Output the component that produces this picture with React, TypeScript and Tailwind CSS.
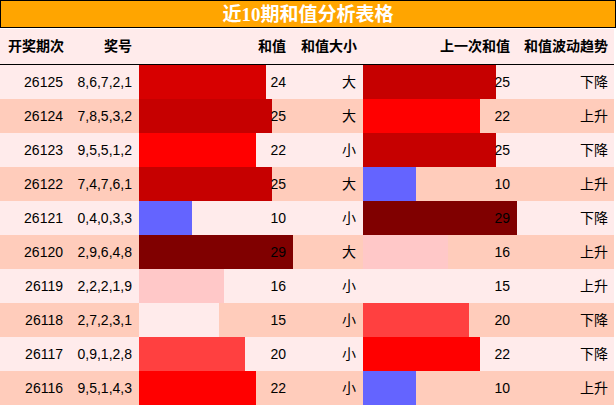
import React from 'react';

type Row = [string, string, number, string, number, string];

const rows: Row[] = [
  ['26125', '8,6,7,2,1', 24, '大', 25, '下降'],
  ['26124', '7,8,5,3,2', 25, '大', 22, '上升'],
  ['26123', '9,5,5,1,2', 22, '小', 25, '下降'],
  ['26122', '7,4,7,6,1', 25, '大', 10, '上升'],
  ['26121', '0,4,0,3,3', 10, '小', 29, '下降'],
  ['26120', '2,9,6,4,8', 29, '大', 16, '上升'],
  ['26119', '2,2,2,1,9', 16, '小', 15, '上升'],
  ['26118', '2,7,2,3,1', 15, '小', 20, '下降'],
  ['26117', '0,9,1,2,8', 20, '小', 22, '下降'],
  ['26116', '9,5,1,4,3', 22, '小', 10, '上升'],
];

// 和值 -> 条形颜色
const barColor: Record<number, string> = {
  10: 'bg-[#6464FF]',
  15: 'bg-[#FFEBEB]',
  16: 'bg-[#FFC8C8]',
  20: 'bg-[#FF4040]',
  22: 'bg-[#FF0000]',
  24: 'bg-[#D70000]',
  25: 'bg-[#C60000]',
  29: 'bg-[#800000]',
};

const gridCols = 'grid grid-cols-[68px_71px_154px_70px_154px_97px]';

const BarCell: React.FC<{ value: number }> = ({ value }) => (
  <div className="relative flex items-center justify-end pr-[7px]">
    <div
      className={`absolute left-0 top-0 bottom-0 ${barColor[value]}`}
      style={{ width: `${(value / 29) * 154}px` }}
    />
    <span className="relative">{value}</span>
  </div>
);

export default function App() {
  return (
    <div
      className="w-[616px] bg-white text-black"
      style={{ fontFamily: '"Liberation Sans", "Noto Sans CJK SC", sans-serif' }}
    >
      <div
        className="h-[28px] border border-black bg-[#FFA500] flex items-center justify-center text-white font-bold text-[19px] leading-none"
        style={{ fontFamily: '"Liberation Serif", "Noto Sans CJK SC", serif' }}
      >
        近10期和值分析表格
      </div>
      <div className="w-[614px] mt-px">
        <div className={`${gridCols} h-[36px] border-b border-black bg-[#FFEBEB] text-[14px] font-bold`}>
          <div className="flex items-center justify-end pr-[4px]">开奖期次</div>
          <div className="flex items-center justify-end pr-[7px]">奖号</div>
          <div className="flex items-center justify-end pr-[7px]">和值</div>
          <div className="flex items-center justify-end pr-[6px]">和值大小</div>
          <div className="flex items-center justify-end pr-[7px]">上一次和值</div>
          <div className="flex items-center justify-end pr-[6px]">和值波动趋势</div>
        </div>
        {rows.map((r, i) => (
          <div
            key={r[0]}
            className={`${gridCols} h-[34px] text-[14px] ${i % 2 === 0 ? 'bg-[#FFEBEB]' : 'bg-[#FFCCBB]'}`}
          >
            <div className="flex items-center justify-end pr-[5px]">{r[0]}</div>
            <div className="flex items-center justify-end pr-[7px]">{r[1]}</div>
            <BarCell value={r[2]} />
            <div className="flex items-center justify-end pr-[7px]">{r[3]}</div>
            <BarCell value={r[4]} />
            <div className="flex items-center justify-end pr-[6px]">{r[5]}</div>
          </div>
        ))}
      </div>
    </div>
  );
}
